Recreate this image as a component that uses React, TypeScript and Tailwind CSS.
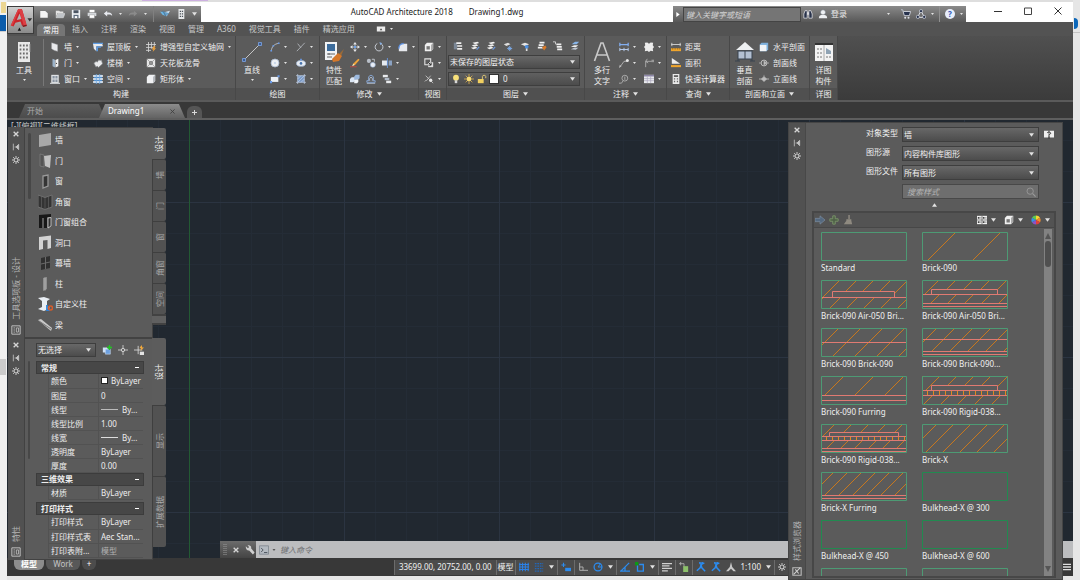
import React from "react";

type Kids = { children?: React.ReactNode };

/* ---------- icons (12 x 12 grid unless noted) ---------- */

const G: Record<string, React.ReactNode> = {
  newFile: <path d="M1.5 2.5h6l3 2.5v5.5h-9z" fill="#f4f4f4" />,
  open: (<><path d="M1 2h4l1 1h4v2H3L1 10z" fill="#e3e3e3" /><path d="M3.500 5.500H12l-2 5H1.200z" fill="#bfc3c7" stroke="#f2f2f2" strokeWidth=".5" /></>),
  save: (<><path d="M1 1h10v10H1z" fill="#edf0f4" /><path d="M3 1.500h6v3.500H3z" fill="#4b5563" /><path d="M3 7h6v4H3z" fill="#5d6b7d" /><path d="M4.500 8.500h3V11h-3z" fill="#fff" /></>),
  print: (<><path d="M3 1h6v3H3z" fill="#fff" /><path d="M.8 4.500h10.400v4H.8z" fill="#d5d8dc" /><path d="M3 7h6v4H3z" fill="#fff" stroke="#888" strokeWidth=".5" /></>),
  undo: <path d="M1 5.500 5 2v2.300h2c2.500 0 4 1.500 4 4.200-1-1.500-2-1.800-4-1.800H5V9z" fill="#e8eaf0" />,
  redo: <path d="M11 5.500 7 2v2.300H5C2.500 4.300 1 5.800 1 8.500c1-1.500 2-1.800 4-1.800h2V9z" fill="#8b8b8b" />,
  plane: (<><path d="M0 3l4 1 2 4-3-1z" fill="#6cb8e6" /><path d="M5 4l7-2-4 7z" fill="#cfe3f2" /><path d="M2 2l9 3-4 4z" fill="#3d83b8" opacity=".7" /></>),
  keypad: (<><path d="M3 0h7v12H3z" fill="#e6e8ea" /><path d="M4.500 2h1.500v1.500H4.500zM7 2h1.500v1.500H7zM4.500 5h1.500v1.500H4.500zM7 5h1.500v1.500H7zM4.500 8h1.500v1.500H4.500zM7 8h1.500v1.500H7z" fill="#4a5058" /></>),
  wall: <path d="M2 1l7 2.200v8L5 10 2 8z" fill="#e9eaec" stroke="#b9bcc0" strokeWidth=".5" />,
  door: (<><path d="M3 1l3 1v9.500L3 10z" fill="#9cb3c9" /><path d="M6.500 2.500L10 1v9L6.500 11.500z" fill="#f2f2f2" /><circle cx="7.800" cy="6.500" r=".7" fill="#444" /></>),
  window: (<><path d="M1.500 1h9v10h-9z" fill="#dfe2e5" /><path d="M3 2.500h2.600v3H3zM6.500 2.500H9v3H6.500zM3 6.500h2.600v3H3zM6.500 6.500H9v3H6.500z" fill="#8993a0" /><path d="M0 10.500h12V12H0z" fill="#c5c8cb" /></>),
  roof: (<><path d="M0 2h11l1 3H4v6L1 8z" fill="#e8eaee" /><path d="M0 1h12v1.500H0zM4 5h7l-2 2H6v4H4z" fill="#5e9be0" /></>),
  stair: <path d="M1 6l3-2 1 1 2-3 1.500 1L10 2l1.500 5-5 4.500-1-1.500-2 .8z" fill="#e9eaec" stroke="#7b7e82" strokeWidth=".8" />,
  space: (<><path d="M1 1h10v10H1z" fill="#4f8fd0" /><path d="M0 2.500h12M0 6h12M0 9.500h12" stroke="#f2f4f6" strokeWidth="1.800" /><path d="M4 0v12M8 0v12" stroke="#70a6dc" /></>),
  grid: (<><path d="M3 0v12M6.500 0v8M10 0v6M0 3h12M0 6.500h9M0 10h6" stroke="#d9d9d9" strokeWidth="1" /><path d="M9 5l-2 4h2l-1 3 4-4.500h-2L11.500 5z" fill="#f0a33c" /></>),
  ceiling: (<><path d="M1 1h10v10H1z" fill="#e6e6e6" /><path d="M4 4h4v4H4z" fill="#5a5a5a" /><path d="M1 1l3 3M11 1L8 4M1 11l3-3M11 11L8 8" stroke="#777" strokeWidth=".7" /><circle cx="6" cy="6" r="1" fill="#ddd" /></>),
  cube: (<><path d="M1 3.500L3.500 1H11v7.500L8.500 11H1z" fill="#f0f1f3" /><path d="M8.500 3.500L11 1v7.500L8.500 11z" fill="#b3b7bc" /></>),
  arc: (<><path d="M1.500 11C2 5.500 5 2.500 10.500 1.500" fill="none" stroke="#c7cad0" /><path d="M.5 9.500h2v2h-2zM9.500.5h2v2h-2zM3 3.500h2v2H3z" fill="#6a9be8" /></>),
  trimline: <path d="M1 11L10.500 1M2 2l4 5" stroke="#b8bcc2" fill="none" />,
  disc: (<><circle cx="6" cy="6" r="4.800" fill="#eef1f5" stroke="#a9b9cf" /><circle cx="6" cy="6" r="1" fill="#a3bde0" /></>),
  ellipse: (<><ellipse cx="6" cy="6.500" rx="5.500" ry="3.500" fill="#e8edf4" stroke="#9cb0ca" /><circle cx="6" cy="6.500" r="1.600" fill="#4673ad" /><path d="M5 1h2v2H5z" fill="#6a9be8" /></>),
  rect: (<><path d="M1 3.500h9v6H1z" fill="#eef1f5" /><path d="M9 1.500h2.500V4H9zM0 8.500h2.500V11H0z" fill="#6a9be8" /></>),
  hatch: (<><path d="M2 2h8v8H2z" fill="#7d9cc8" /><path d="M2 0v12M10 0v12M0 2h12M0 10h12M2 6l4-4M2 10l8-8M6 10l4-4" stroke="#c2d2ea" strokeWidth=".8" /></>),
  move: (<><path d="M6 0l2.200 3H3.800zM6 12l2.200-3H3.800zM0 6l3-2.200v4.400zM12 6L9 3.800v4.400z" fill="#ececec" /><path d="M6 2v8M2 6h8" stroke="#c4ccd6" /><path d="M4.800 4.800h2.400v2.400H4.800z" fill="#6aa0e8" /></>),
  rotate: (<><path d="M8.500 2A4.700 4.700 0 1 1 4 1.800" fill="none" stroke="#c5cad2" strokeWidth="1.200" /><path d="M6.500 0l3.500 1.500L7.500 4z" fill="#88aede" /></>),
  fillet: (<><path d="M1 11V7c0-3.500 2.500-5 5-5h5v9z" fill="#e7e9ed" /><path d="M1 8c0-4 2-6 6-6" fill="none" stroke="#5a8ee0" strokeWidth="1.500" /></>),
  erase: (<><path d="M0 10.500h8" stroke="#d0463c" /><path d="M3 9l1-2.500L10 .8 11.500 2 6 8.300z" fill="#f0a43a" /><path d="M2.500 9.800L4 7l1.700 1.300z" fill="#f5e5c0" /></>),
  copy: (<><circle cx="3.500" cy="3.500" r="2.500" fill="#b9bfc8" /><circle cx="8.200" cy="8.200" r="3" fill="#e8edf5" stroke="#8fa9cf" strokeWidth=".7" /><path d="M7 1.500h3v3" fill="none" stroke="#cfd4db" /></>),
  mirror: (<><path d="M0 3h6v6H0z" fill="#e6eaf0" /><path d="M6.500 0v12" stroke="#6a9be8" /><path d="M8 3h4v6H8z" fill="#8ba2c2" /></>),
  cubes: (<><path d="M0 6l2-2h4v4L4 10H0z" fill="#dbe6f4" /><path d="M5 3l2-2h4.500v4L9.500 7H5z" fill="#9cb9de" /><path d="M5 8l1.500-1.500H10v3L8.500 11H5z" fill="#f0f4f9" /></>),
  offset: (<><path d="M1 10V8h2.500C2 5 3.500 1.500 6 1.500S10 5 8.500 8H11v2z" fill="none" stroke="#8fb2e4" /><path d="M4.500 8C4 6 4.500 4 6 4s2 2 1.500 4M1 11.700h10" fill="none" stroke="#c6d2e4" /></>),
  order: (<><path d="M1 1h6v3H1z" fill="#e8eaed" /><path d="M3 4.500h6v3H3z" fill="#b9c4d3" stroke="#555" strokeWidth=".5" /><path d="M5 8h6v3H5z" fill="#e8eaed" /></>),
  viewcube: (<><path d="M1 3.500L3.500 1H11v7.500L8.500 11H1z" fill="#f0f0f0" /><path d="M3 5h4v4H3z" fill="#777" /><path d="M8.500 3.500L11 1v7.500L8.500 11z" fill="#a6a6a6" /></>),
  viewback: (<><path d="M1 1h7v7H1z" fill="none" stroke="#e3e3e3" strokeWidth="1.300" /><path d="M5 5h6v6H5z" fill="#dcdcdc" /><path d="M5 5l3.500 3.500M8.500 5.500v3h-3" stroke="#333" strokeWidth="1.200" fill="none" /></>),
  explode: (<><path d="M2 2l4 4M8 2L3 8M1 9l2-2M7 7l4 4" stroke="#c8c8c8" /><circle cx="8" cy="7.500" r="2" fill="#e5e5e5" /></>),
  layerA: (<><path d="M1 2h4v8H1z" fill="#7b8796" /><path d="M4 1.500h6v2H4zM5 5h6v2H5zM5 8.500h6v2H5z" fill="#f0f0f0" /></>),
  layerB: (<><path d="M3 2l6-1 2 1.500-5 1.500zM2 5l6-1 2 1.500L5 7zM1 8l6-1 2 1.500L4 10z" fill="#efefef" /><path d="M8 10.500L11 7" stroke="#6a9be8" strokeWidth="1.300" /></>),
  layerC: (<><path d="M1 4l5-2 3 2-5 2z" fill="#dedede" /><path d="M8 6v6M5 9h6M6 7l4 4M10 7l-4 4" stroke="#7eb0f0" /></>),
  layerD: (<><path d="M1 4l5-2 5 2-5 2z" fill="#e6e6e6" /><circle cx="8" cy="7" r="2.300" fill="#4d8fe0" /><path d="M7 9h2v3H7z" fill="#e0e0e0" /></>),
  layerE: (<><path d="M3 1h6v2H3zM2 4h6v2H2zM1 7h6v2H1z" fill="#f0f0f0" /><path d="M6 7.500l4-2 1.500 2-3 4z" fill="#d97a28" /></>),
  layerF: (<><path d="M0 1h3v3" stroke="#ddd" fill="none" /><path d="M4 3h6v2H4zM4.500 6h6v2h-6zM5 9h6v2H5z" fill="#efefef" /></>),
  layerG: (<><path d="M2 4l4-3h5L8 4z" fill="#86b4e8" /><path d="M1 7l4-2h5L7 7.500z" fill="#efefef" /><path d="M1 10l4-2h5l-3 2.500z" fill="#bfc8d4" /></>),
  dims: (<><path d="M1 1v4M11 1v4M1 3h10" stroke="#82aef0" strokeWidth="1.500" /><path d="M1 7v4M6 7v4M11 7v4M1 9h10" stroke="#b4c9ea" strokeWidth="1.200" /></>),
  cloud: <path d="M1 1l3-.5L6 2l2-1.500 3 .5-.5 3L12 6l-1.500 2 .5 3-3-.5L6 12l-2-1.500-3 .5.5-3L0 6l1.500-2z" fill="#ececec" />,
  leader: (<><path d="M1 11L6 4h3" fill="none" stroke="#bcbcbc" /><circle cx="10" cy="3" r="1.800" fill="#e8e8e8" /><path d="M0 12l1-4 2 2z" fill="#bcbcbc" /></>),
  leader2: (<><path d="M2 11V4h8M4 1L2 4l3 2" fill="none" stroke="#b5b5b5" /><path d="M9 2h3v3H9z" fill="#999" /></>),
  tag: (<><circle cx="7" cy="5" r="3.500" fill="none" stroke="#b5b5b5" /><path d="M0 11h3l2-3M7 3v4" fill="none" stroke="#b5b5b5" /></>),
  table: (<><path d="M0 1h12v10H0z" fill="#e9ebee" /><path d="M0 1h12v2H0z" fill="#8c86a6" /><path d="M0 5.500h12M0 8h12M4 3v8M8 3v8" stroke="#aaa6bd" strokeWidth=".8" /></>),
  dist: (<><path d="M0 3h12M1 1v4M11 1v4" stroke="#c8c8c8" strokeWidth="1.200" /><path d="M0 7.500h12v3.500H0z" fill="#f0a52c" /><path d="M2 7.500V9M5 7.500V9M8 7.500V9M10.500 7.500V9" stroke="#6b4a10" strokeWidth=".7" /></>),
  area: (<><path d="M1 7V0l10 7z" fill="#ececec" /><path d="M0 8.500h12V11H0z" fill="#f0a52c" /></>),
  calc: (<><path d="M2 0h8v12H2z" fill="#e9e9e9" /><path d="M3.500 1.500h5v2h-5z" fill="#555" /><path d="M3.500 5h1.500v1.500H3.500zM7 5h1.500v1.500H7zM3.500 8h1.500v2H3.500zM7 8h1.500v2H7z" fill="#666" /></>),
  hsec: (<><path d="M1 3l2-2h8v8l-2 2H1z" fill="#7db0dc" /><path d="M1 3.500h8V11H1z" fill="#f2f4f6" /></>),
  sec: (<><circle cx="6" cy="6" r="3.500" fill="none" stroke="#c0c0c0" strokeWidth="1.200" /><path d="M6 3.500L9 6 6 8.500zM0 6h2.500M9.500 6H12" fill="#c9c9c9" stroke="#b0b0b0" /></>),
  elev: (<><path d="M6 3l3 3-3 3-3-3zM0 6h12" fill="#bdbdbd" stroke="#bdbdbd" /><path d="M6 1v3" stroke="#999" /></>),
  binoc: (<><path d="M1 11V6l1.500-4h2.500v9zM7 11V2h2.500L11 6v5z" fill="#28324a" stroke="#e9e9ee" strokeWidth=".9" /><path d="M5 4h2v3H5z" fill="#e9e9ee" /></>),
  user: (<><circle cx="6" cy="4" r="3" fill="#eef0f3" stroke="#5a6370" strokeWidth=".5" /><path d="M1 11c0-3 2-4 5-4s5 1 5 4z" fill="#eef0f3" /></>),
  cart: (<><path d="M0 1h2l2 7h6l1.500-5H3" fill="#27324d" stroke="#dfe2ea" strokeWidth="1" /><circle cx="5" cy="10.500" r="1.200" fill="#dfe2ea" /><circle cx="9" cy="10.500" r="1.200" fill="#dfe2ea" /></>),
  share: (<><path d="M6 2L2 10h8z" fill="none" stroke="#dfe2ea" strokeWidth="1.200" /><circle cx="6" cy="2.500" r="1.900" fill="#27324d" stroke="#dfe2ea" strokeWidth=".8" /><circle cx="2.200" cy="9.500" r="1.900" fill="#27324d" stroke="#dfe2ea" strokeWidth=".8" /><circle cx="9.800" cy="9.500" r="1.900" fill="#27324d" stroke="#dfe2ea" strokeWidth=".8" /></>),
  play: (<><path d="M1 3h10v6H1z" fill="#ececec" /><path d="M4.500 7.500L6 5l1.500 2.500z" fill="#444" /></>),
  x: <path d="M2.500 2.500l7 7M9.500 2.500l-7 7" stroke="#d6d6d6" strokeWidth="2" />,
  pin: <path d="M2 1v10M4 6h2M10 2v8L6 6z" stroke="#c6c6c6" strokeWidth="1.200" fill="#c6c6c6" />,
  gear: (<><circle cx="6" cy="6" r="3" fill="none" stroke="#cccccc" strokeWidth="1.700" /><path d="M6 0v2M6 10v2M0 6h2M10 6h2M1.800 1.800l1.400 1.400M8.800 8.800l1.400 1.400M1.800 10.200l1.400-1.400M8.800 3.200l1.400-1.400" stroke="#cccccc" strokeWidth="1.500" /></>),
  propsIcon: (<><path d="M1 1h10v10H1z" fill="none" stroke="#bcbcbc" strokeWidth="1.200" /><path d="M3 3.500h2M3 6h2M3 8.500h2M6.500 3.500H9v5H6.500z" stroke="#bcbcbc" fill="none" /></>),
  editIcon: (<><path d="M1 2h10v9H1z" fill="none" stroke="#bcbcbc" strokeWidth="1.300" /><path d="M2 10l8-8M4 4l4 5" stroke="#d0d0d0" strokeWidth="1.300" /></>),
  bulb: (<><circle cx="6" cy="4.500" r="3.500" fill="#f7e07a" /><path d="M4.500 7.500h3v3.500h-3z" fill="#d8d8d8" /></>),
  sun: (<><path d="M6 0v12M0 6h12M2 2l8 8M10 2l-8 8" stroke="#e8b84c" strokeWidth=".9" /><circle cx="6" cy="6" r="2.800" fill="#f7dc74" /></>),
  lock: (<><path d="M1 6h7v5H1z" fill="#f0cf60" /><path d="M6.500 6V3c0-2 4-2 4 0v2" fill="none" stroke="#d9c274" strokeWidth="1.200" /></>),
  addSel: (<><path d="M1 3h6v6H1z" fill="#cfe0f5" /><path d="M4 5h6v6H4z" fill="#6da0df" stroke="#d8e6f8" strokeWidth=".6" /><path d="M9 0v6M6 3h6" stroke="#22c522" strokeWidth="1.700" /></>),
  cross: (<><path d="M6 0v12M0 6h12" stroke="#d5d5d5" /><circle cx="6" cy="6" r="2" fill="#666" stroke="#ddd" /></>),
  quick: (<><path d="M5 1v10M0 6h10" stroke="#dcdcdc" /><path d="M9 0L6.500 4h2L8 7l4-4h-2z" fill="#f2a93c" /><path d="M7 8h5v4H7z" fill="#e4e4e4" /></>),
  help2: (<><path d="M0 1h5.500v8H0zM6.500 1H12v8H6.500z" fill="#f0f0f0" /><path d="M4 3.500C4 2 8 2 8 4c0 1-2 1-2 2.500M6 7.500v3" stroke="#333" strokeWidth="1.200" fill="none" /></>),
  glass: (<><circle cx="5" cy="5" r="3.800" fill="none" stroke="#9b9b9b" strokeWidth="1" /><path d="M8 8l3.500 3.500" stroke="#9b9b9b" strokeWidth="1.300" /></>),
  arrowR: <path d="M0 4h6V1l6 5-6 5V8H0z" fill="#55697f" stroke="#7d8ea0" strokeWidth=".8" />,
  plusG: <path d="M4.500 1h3v3.500H11v3H7.500V11h-3V7.500H1v-3h3.500z" fill="#4f6148" stroke="#82a070" strokeWidth=".9" />,
  brush: (<><path d="M6.500 0h1.500v5H6.500z" fill="#9b948a" /><path d="M4 5h6v2l1 4H1l3-4z" fill="#8f8a80" /></>),
  details: (<><path d="M0 1h12v10H0z" fill="#f0f0f0" /><path d="M6 1v10M0 6h12" stroke="#555" strokeWidth=".8" /><path d="M1 2.500h2v2H1zM7 2.500h2v2H7zM1 7.500h2v2H1zM7 7.500h2v2H7z" fill="#444" /><path d="M3.500 3.500h2M9.500 3.500h2M3.500 8.500h2M9.500 8.500h2" stroke="#777" /></>),
  wheel: (<><path d="M6 6V.5A5.500 5.500 0 0 1 10.800 3.300z" fill="#f5d633" /><path d="M6 6l4.800-2.700A5.500 5.500 0 0 1 10.800 8.700z" fill="#f08c2e" /><path d="M6 6l4.800 2.700A5.500 5.500 0 0 1 6 11.500z" fill="#e0413c" /><path d="M6 6v5.500A5.500 5.500 0 0 1 1.200 8.700z" fill="#8d52c8" /><path d="M6 6L1.200 8.700A5.500 5.500 0 0 1 1.200 3.300z" fill="#3a8fe8" /><path d="M6 6L1.200 3.300A5.500 5.500 0 0 1 6 .5z" fill="#5cc852" /></>),
  wrench: <path d="M1 1.500l2.500 2.500L5 2.500 3 .5c3-.8 5 1 4.300 3.500L11.500 9 9.500 11.500 5 6.500C2.500 7 .5 4.500 1 1.500z" fill="#cfcfcf" />,
  prompt: (<><path d="M.5 1h11v10H.5z" fill="#b4bac1" stroke="#7c848d" /><path d="M2.500 3.500L5 6 2.500 8.500M6 9h4" fill="none" stroke="#3f474f" /></>),
  sGrid: <path d="M1 1v10M4.300 1v10M7.600 1v10M11 1v10M0 3h12M0 6h12M0 9h12" stroke="#2b80e6" strokeWidth="1.300" />,
  sSnap: <path d="M1 2h10M1 5h10M1 8h10M1 11h10" stroke="#2367b8" strokeDasharray="2 1" strokeWidth="1.400" />,
  sInfer: (<><path d="M3 1v5M.5 3.500h5" stroke="#2b8cf0" strokeWidth="1.300" /><path d="M5 7h7v4H5z" fill="#2b8cf0" /></>),
  sOrtho: <path d="M2 1v9h10M2 6h4v4" stroke="#b3b3b3" fill="none" strokeWidth="1.100" />,
  sPolar: (<><circle cx="6" cy="6" r="4.700" fill="none" stroke="#2b8cf0" strokeWidth="1.500" /><path d="M6 6h5M6 6l3-4" stroke="#2b8cf0" strokeWidth="1.200" /></>),
  sIso: <path d="M0 11h12M1 11L11 1M6 6v5" stroke="#2b8cf0" strokeWidth="1.500" fill="none" />,
  sOsnap: (<><path d="M3 4v7h7V3H5" fill="none" stroke="#2b8cf0" strokeWidth="1.600" /><path d="M0 0h4v4H0z" fill="#0c9a14" /></>),
  sLines: <path d="M0 2h12M0 4.500h9M0 7.500h12M0 10.500h7" stroke="#d0d0d0" strokeWidth="1.500" />,
  sCycle: (<><path d="M0 2h6v4M2 0v4" stroke="#b0b0b0" fill="none" /><path d="M5 5h6v7H5z" fill="#8cc06a" /></>),
  sPerson: <path d="M1 10.500l4-3.500 1-3M11 11L7 7 6 3l4-2M6 2.500a1.500 1.500 0 1 1 .1 0" stroke="#2b8cf0" strokeWidth="1.800" fill="none" />,
  sAnno: <path d="M6 0l1.500 6L12 11H9L6 8l-3 3H0l4.500-5z" fill="#c8c8c8" />,
  menu: <path d="M0 2h12M0 6h12M0 10h12" stroke="#e0e0e0" strokeWidth="2" />,
};

const SIZES: Record<number, string> = {
  8: "size-2 shrink-0",
  10: "size-[10px] shrink-0",
  12: "size-3 shrink-0",
};

function Ic({ n, s = 10 }: { n: string; s?: 8 | 10 | 12 }) {
  return (
    <svg viewBox="0 0 12 12" className={SIZES[s]} aria-hidden="true">
      {G[n]}
    </svg>
  );
}

function Caret({ big = false, up = false }: { big?: boolean; up?: boolean }) {
  return (
    <svg viewBox="0 0 6 4" className={big ? "w-[5px] h-1 shrink-0" : "w-[3px] h-0.5 shrink-0"} aria-hidden="true">
      <path d={up ? "M0 4h6L3 0z" : "M0 0h6L3 4z"} fill="#e2e2e2" />
    </svg>
  );
}

/* ---------- title bar and menu ---------- */

function AppButton() {
  return (
    <button aria-label="应用程序菜单" className="flex h-[28px] w-[27px] shrink-0 items-center justify-center border border-[#3c3c3c] bg-linear-to-b from-[#cfcfcf] to-[#8a8a8a]">
      <svg viewBox="0 0 27 27" className="size-[25px]" aria-hidden="true">
        <path d="M3 19L11 1h4l5 17-5 1-1.500-4.500L8 16l-2 4z" fill="#c9252b" />
        <path d="M11 1h4l5 17-3 .5L12 3 4.500 19.500 3 19z" fill="#dc3f44" />
        <path d="M9.500 13l3-7 2 6z" fill="#b4b4b4" />
        <path d="M15 19l5-1 .5 1.500-4 1z" fill="#8a1418" />
        <path d="M21 11h5l-2.500 3.500z" fill="#333" />
        <path d="M10.500 24.500l1.800-3.500 1.800 3.500z" fill="#111" />
      </svg>
    </button>
  );
}

function Tool({ n, label, s = 10 }: { n: string; label: string; s?: 8 | 10 | 12 }) {
  return (
    <button aria-label={label} className="flex items-center justify-center">
      <Ic n={n} s={s} />
    </button>
  );
}

function TitleRow() {
  return (
    <div className="flex h-4 items-stretch bg-white">
      <div className="flex items-center gap-1.5 bg-linear-to-b from-[#8a8a8a] to-[#585858] pl-[5px] pr-1">
        <Tool n="newFile" label="新建" />
        <Tool n="open" label="打开" />
        <Tool n="save" label="保存" />
        <Tool n="print" label="打印" />
        <Tool n="undo" label="放弃" />
        <Caret />
        <Tool n="redo" label="重做" />
        <Caret />
        <span className="h-4 w-px bg-[#808080]" />
        <Tool n="plane" label="共享" />
        <Tool n="keypad" label="工具选项板" />
        <Caret big />
      </div>
      <h1 className="flex flex-1 items-start justify-center gap-4 pt-0.5 text-[8px] text-[#222]">
        <span>AutoCAD Architecture 2018</span>
        <span>Drawing1.dwg</span>
      </h1>
      <div className="flex w-[293px] items-center bg-linear-to-b from-[#8a8a8a] to-[#585858]">
        <svg viewBox="0 0 4 6" className="ml-[3px] mr-[3px] h-[5px] w-1" aria-hidden="true"><path d="M0 0v6l4-3z" fill="#fff" /></svg>
        <input aria-label="搜索" placeholder="键入关键字或短语" className="h-[15px] w-[118px] border border-[#444] bg-[#757575] px-0.5 text-[8px] italic text-white outline-none placeholder:text-[#d2d2d2]" />
        <div className="flex flex-1 items-center gap-[5px] pl-0.5 pr-[3px]">
          <Tool n="binoc" label="查找" />
          <Tool n="user" label="用户" />
          <a href="#login" className="-ml-0.5 text-[8px] text-[#e9e9e9]">登录</a>
          <span className="flex-1" />
          <Caret />
          <span className="w-px" />
          <Tool n="cart" label="购物车" />
          <Tool n="share" label="连接" />
          <Caret />
          <span className="h-4 w-px bg-[#909090]" />
          <span className="flex size-[10px] items-center justify-center rounded-full bg-[#e8eefb] text-[8px] font-bold leading-none text-[#2c55b8]">?</span>
          <Caret />
        </div>
      </div>
      <div className="flex w-[107px] items-start justify-between pl-[28px] pr-[11px] pt-px">
        <button aria-label="最小化"><svg viewBox="0 0 8 8" className="size-2"><path d="M0 4.500h8" stroke="#333" /></svg></button>
        <button aria-label="最大化"><svg viewBox="0 0 8 8" className="size-2"><path d="M.5 1h7v6.500h-7z" stroke="#444" fill="none" /></svg></button>
        <button aria-label="关闭"><svg viewBox="0 0 8 8" className="size-2"><path d="M.5.5l7 7M7.500.5l-7 7" stroke="#333" /></svg></button>
      </div>
    </div>
  );
}

const MENU = ["插入", "注释", "渲染", "视图", "管理", "A360", "视觉工具", "插件", "精选应用"];

function MenuRow() {
  return (
    <nav className="flex h-[14px] items-center gap-[13px] pl-[9px] text-[8px] text-[#c9c9c9]">
      <button className="-mx-1.5 mt-0.5 h-3 rounded-t-sm bg-[#757575] px-1.5 text-white">常用</button>
      {MENU.map((m) => (
        <button key={m}>{m}</button>
      ))}
      <span className="ml-2 flex items-center gap-1"><Ic n="play" /><Caret /></span>
    </nav>
  );
}

/* ---------- ribbon ---------- */

function Panel({ title, w, caret, children }: Kids & { title: string; w: string; caret?: boolean }) {
  return (
    <section className={`${w} flex shrink-0 flex-col border-r border-[#484848] bg-[#5b5b5b]`}>
      <div className="flex flex-1 pt-[3px]">{children}</div>
      <h2 className="flex h-3 items-center justify-center gap-1 bg-[#505050] text-[8px]">
        {title}
        {caret && <Caret big />}
      </h2>
    </section>
  );
}

function Cmd({ n, label, text, caret }: { n: string; label?: string; text?: string; caret?: boolean }) {
  return (
    <button aria-label={label} className="flex h-4 items-center gap-1 whitespace-nowrap">
      <Ic n={n} />
      {text && <span>{text}</span>}
      {caret && <Caret />}
    </button>
  );
}

function Big({ lines, icon, caret, w }: { lines: string[]; icon: React.ReactNode; caret?: boolean; w: string }) {
  return (
    <button className={`${w} flex shrink-0 flex-col items-center pt-0.5 leading-[11px]`}>
      <span className="mb-0.5 flex h-[21px] items-center">{icon}</span>
      {lines.map((l) => (
        <span key={l}>{l}</span>
      ))}
      {caret && <span className="flex h-1.5 items-end"><Caret /></span>}
    </button>
  );
}

function Ribbon() {
  return (
    <div className="flex h-[66px] border-b-2 border-[#5a5a5a] bg-linear-to-b from-[#505050] to-[#3b3b3b] text-[8px] text-[#eeeeee]">
      <Panel title="构建" w="w-[229px]">
        <Big w="w-[34px]" lines={["工具"]} caret icon={
          <svg viewBox="0 0 14 20" className="h-5 w-[14px]">
            <path d="M1 0h12v20H1z" fill="#e8e8e8" />
            <path d="M3.500 2.500v15M6.800 2.500v15M10 2.500v15" stroke="#6a6a6a" strokeWidth="1.700" strokeDasharray="2 2" />
            <path d="M13 2v8" stroke="#888" />
          </svg>} />
        <span className="mx-[2px] mb-0.5 w-px bg-[#787878]" />
        <div className="ml-1 w-[43px]">
          <Cmd n="wall" text="墙" caret /><Cmd n="door" text="门" caret /><Cmd n="window" text="窗口" caret />
        </div>
        <div className="w-[53px]">
          <Cmd n="roof" text="屋顶板" caret /><Cmd n="stair" text="楼梯" caret /><Cmd n="space" text="空间" caret />
        </div>
        <div>
          <Cmd n="grid" text="增强型自定义轴网" caret /><Cmd n="ceiling" text="天花板龙骨" /><Cmd n="cube" text="矩形体" caret />
        </div>
      </Panel>
      <Panel title="绘图" w="w-[84px]">
        <Big w="w-[32px]" lines={["直线"]} caret icon={
          <svg viewBox="0 0 20 20" className="size-5">
            <path d="M2 18L18 2" stroke="#c4c4c4" />
            <path d="M.5 16.500h3v3h-3zM16.500.5h3v3h-3z" fill="#3d5f96" stroke="#7ea6e8" strokeWidth=".8" />
          </svg>} />
        <div className="ml-0.5 grid auto-rows-[16px] grid-cols-2 gap-x-[9px]">
          <Cmd n="arc" label="圆弧" caret /><Cmd n="trimline" label="构造线" caret />
          <Cmd n="disc" label="圆" caret /><Cmd n="ellipse" label="椭圆" caret />
          <Cmd n="rect" label="矩形" caret /><Cmd n="hatch" label="图案填充" caret />
        </div>
      </Panel>
      <Panel title="修改" w="w-[99px]" caret>
        <Big w="w-[28px]" lines={["特性", "匹配"]} icon={
          <svg viewBox="0 0 22 22" className="size-[22px]">
            <path d="M2 1h12v18H2z" fill="#f1f3f5" /><path d="M4 3h8v7H4z" fill="#3c6c9c" />
            <path d="M4 13h8M4 16h5M6 12v2" stroke="#666" />
            <path d="M21 8l-5 5 2 2z" fill="#9a6a38" /><path d="M9 18l6-6 4 3-3 5-6 1z" fill="#d5782a" />
          </svg>} />
        <div className="ml-0.5">
          <div className="flex gap-[7px]"><Cmd n="move" label="移动" caret /><Cmd n="rotate" label="旋转" caret /><Cmd n="fillet" label="圆角" caret /></div>
          <div className="flex gap-[6px]"><Cmd n="erase" label="删除" /><Cmd n="copy" label="复制" /><Cmd n="mirror" label="镜像" caret /></div>
          <div className="flex gap-[6px]"><Cmd n="cubes" label="阵列" /><Cmd n="offset" label="偏移" /><Cmd n="order" label="绘图次序" caret /></div>
        </div>
      </Panel>
      <Panel title="视图" w="w-[28px]">
        <div className="ml-[5px]"><Cmd n="viewcube" label="视图" caret /><Cmd n="viewback" label="视觉样式" caret /><Cmd n="explode" label="导航" caret /></div>
      </Panel>
      <Panel title="图层" w="w-[138px]" caret>
        <div className="flex flex-1 flex-col gap-[2px] pl-px pr-1">
          <div className="flex h-[14px] items-center justify-between pl-[5px]">
            {["layerA", "layerB", "layerB", "layerC", "layerD", "layerE", "layerF", "layerG"].map((n, i) => (
              <Tool key={i} n={n} label={`图层工具 ${i + 1}`} />
            ))}
          </div>
          <Select label="图层状态" value="未保存的图层状态" />
          <div className="mt-px flex h-[14px] items-center gap-[3px] border border-[#3e3e3e] bg-linear-to-b from-[#606060] to-[#4c4c4c] pl-0.5">
            <Ic n="bulb" /><Ic n="sun" /><Ic n="lock" />
            <span className="size-2 bg-white outline outline-[#333]" />
            <select aria-label="当前图层" className="flex-1 appearance-none bg-transparent pl-0.5 outline-none"><option>0</option></select>
            <span className="pr-1"><Caret big /></span>
          </div>
        </div>
      </Panel>
      <Panel title="注释" w="w-[82px]" caret>
        <Big w="w-[34px]" lines={["多行", "文字"]} icon={
          <svg viewBox="0 0 18 20" className="h-5 w-[18px]"><path d="M1.500 19L8 1h2l6.500 18M4 13h10" fill="none" stroke="#c9c9c9" strokeWidth="1.600" /></svg>} />
        <div className="grid auto-rows-[16px] grid-cols-2 gap-x-2">
          <Cmd n="dims" label="标注" caret /><Cmd n="cloud" label="修订云线" caret />
          <Cmd n="leader" label="引线" caret /><Cmd n="leader2" label="多重引线" caret />
          <Cmd n="tag" label="标记" caret /><Cmd n="table" label="表格" caret />
        </div>
      </Panel>
      <Panel title="查询" w="w-[63px]" caret>
        <div className="ml-1"><Cmd n="dist" text="距离" /><Cmd n="area" text="面积" /><Cmd n="calc" text="快速计算器" /></div>
      </Panel>
      <Panel title="剖面和立面" w="w-[80px]" caret>
        <Big w="w-[29px]" lines={["垂直", "剖面"]} icon={
          <svg viewBox="0 0 20 20" className="size-5">
            <path d="M10 0l9 8H1z" fill="#eef0f2" /><path d="M3 9h14v8H3z" fill="#b3c0d2" />
            <path d="M3 9h14M3 17h14M10 9v8M3 8v11M17 8v11M0 19h5M15 19h5" stroke="#39424e" />
          </svg>} />
        <div><Cmd n="hsec" text="水平剖面" /><Cmd n="sec" text="剖面线" /><Cmd n="elev" text="立面线" /></div>
      </Panel>
      <Panel title="详图" w="w-[28px]">
        <Big w="w-full" lines={["详图", "构件"]} icon={
          <svg viewBox="0 0 18 18" className="size-[18px]">
            <path d="M0 0h18v18H0z" fill="#f3f3f3" /><path d="M0 0h18v2H0z" fill="#333" />
            <path d="M9 2v16" stroke="#aaa" /><path d="M2 6h5M2 10h5M2 14h5M11 14h5" stroke="#777" strokeDasharray="2 1" />
            <path d="M11 5l5 3v3h-5z" fill="#8fa3b4" />
          </svg>} />
      </Panel>
    </div>
  );
}

function Select({ label, value, id, h = "h-[14px]" }: { label: string; value: string; id?: string; h?: string }) {
  return (
    <span className={`${h} flex w-full items-center border border-[#3e3e3e] bg-linear-to-b from-[#686868] to-[#4c4c4c] pr-1 text-[8px] text-[#f0f0f0]`}>
      <select id={id} aria-label={label} className="min-w-0 flex-1 appearance-none bg-transparent pl-px outline-none">
        <option>{value}</option>
      </select>
      <Caret big />
    </span>
  );
}

function DocTabs() {
  return (
    <div className="flex h-[18px] items-end border-b-2 border-[#5e5e5e] bg-[#383838] pl-3 text-[8px]">
      <button className="h-[14px] w-[86px] rounded-t-md bg-linear-to-b from-[#5c5c5c] to-[#4c4c4c] pl-2 text-left text-[#a9a9a9] [clip-path:polygon(7%_0,93%_0,100%_100%,0_100%)]">开始</button>
      <div className="-ml-1.5 flex h-[14px] w-[86px] items-center rounded-t-md bg-linear-to-b from-[#8c8c8c] to-[#636363] pl-[9px] pr-2.5 text-white [clip-path:polygon(7%_0,93%_0,100%_100%,0_100%)]">
        <button className="flex-1 text-left">Drawing1</button>
        <button aria-label="关闭图形"><svg viewBox="0 0 6 6" className="size-[5px]"><path d="M.5.5l5 5M5.500.5l-5 5" stroke="#3d3d3d" /></svg></button>
      </div>
      <button aria-label="新图形" className="ml-0.5 flex h-3 w-[15px] items-center justify-center rounded-t-md bg-[#555]">
        <svg viewBox="0 0 6 6" className="size-[5px]"><path d="M3 0v6M0 3h6" stroke="#d8d8d8" strokeWidth="1.200" /></svg>
      </button>
    </div>
  );
}

/* ---------- drawing area ---------- */

function Canvas() {
  return (
    <div className="relative flex-1 bg-[#212830]">
      <svg className="absolute inset-0 size-full" aria-hidden="true">
        <defs>
          <pattern id="grid" x="27" y="82" width="155" height="155" patternUnits="userSpaceOnUse">
            <path d="M31.500 0v155M62.500 0v155M93.500 0v155M124.500 0v155M0 31.500h155M0 62.500h155M0 93.500h155M0 124.500h155" stroke="#242c36" />
            <path d="M.5 0v155M0 .5h155" stroke="#2b3441" />
          </pattern>
        </defs>
        <rect width="100%" height="100%" fill="url(#grid)" />
        <path d="M182.500 0v2000" stroke="#235a33" />
      </svg>
      <p className="absolute left-1 top-0.5 text-[8px] leading-[8px] text-[#c8c8c8]">[-][俯视][二维线框]</p>
      <div className="absolute bottom-0 left-[213px] right-0 flex h-[17px] items-center bg-[#bcbdbf]">
        <div className="flex h-full w-[36px] items-center gap-[5px] bg-linear-to-b from-[#6c6c6c] to-[#444] pl-[3px]">
          <svg viewBox="0 0 4 12" className="h-3 w-1"><path d="M1 0v12M3 0v12" stroke="#999" strokeDasharray="1 1" /></svg>
          <Tool n="x" label="关闭命令行" s={8} />
          <Tool n="wrench" label="自定义" />
        </div>
        <span className="flex items-center gap-[3px] pl-[3px]"><Ic n="prompt" /><svg viewBox="0 0 6 4" className="h-0.5 w-1"><path d="M0 0h6L3 4z" fill="#555" /></svg></span>
        <input aria-label="命令行" placeholder="键入命令" className="ml-1 h-full flex-1 bg-transparent text-[8px] italic text-[#333] outline-none placeholder:text-[#6f7072]" />
      </div>
    </div>
  );
}

function Cell({ children }: Kids) {
  return <div className="flex h-[15px] items-center gap-[5px] border-l border-[#6c6c6c] bg-[#4b4b4b] px-[3px]">{children}</div>;
}

function StatusBar() {
  return (
    <footer className="flex h-[18px] items-center bg-[#383838] text-[8px] text-[#f0f0f0]">
      <div className="flex h-full flex-1 items-start gap-0.5 pl-[7px] leading-3 text-[#c4c4c4]">
        <button className="h-3 w-[30px] rounded-b-md bg-[#8c8c8c] font-bold text-white">模型</button>
        <button className="h-3 w-[34px] rounded-b-md bg-[#585858]">Work</button>
        <button aria-label="新建布局" className="flex h-3 w-[14px] items-center justify-center rounded-b-md bg-[#4c4c4c] text-white">+</button>
      </div>
      <Cell><span className="px-px">33699.00, 20752.00, 0.00</span></Cell>
      <Cell><button className="-mx-0.5">模型</button></Cell>
      <Cell><Tool n="sGrid" label="栅格" /><Tool n="sSnap" label="捕捉" /><Caret big /></Cell>
      <Cell><Tool n="sInfer" label="推断约束" /></Cell>
      <Cell><Tool n="sOrtho" label="正交" /><Tool n="sPolar" label="极轴追踪" /><Caret big /></Cell>
      <Cell><Tool n="sIso" label="等轴测" /><Tool n="sOsnap" label="对象捕捉" /><Caret big /></Cell>
      <Cell><Tool n="sLines" label="线宽" /></Cell>
      <Cell><Tool n="sCycle" label="选择循环" /></Cell>
      <Cell><Tool n="sPerson" label="注释可见性" /><Tool n="sPerson" label="自动缩放" /><Tool n="sAnno" label="注释比例" /><button>1:100</button><Caret big /></Cell>
      <Cell><Tool n="gear" label="切换工作空间" s={8} /></Cell>
      <div className="flex w-[284px] justify-end pr-0.5"><Tool n="menu" label="自定义" s={8} /></div>
    </footer>
  );
}

/* ---------- palettes ---------- */

function VText({ children }: Kids) {
  return <span className="rotate-180 whitespace-nowrap leading-none [text-orientation:sideways] [writing-mode:vertical-rl]">{children}</span>;
}

function Strip({ title, icon = "propsIcon" }: { title: string; icon?: string }) {
  return (
    <div className="flex w-4 shrink-0 flex-col items-center gap-[5px] bg-[#515151] py-[3px] text-[8px] text-[#b5b5b5]">
      <Tool n="x" label="关闭" s={8} />
      <Tool n="pin" label="自动隐藏" s={8} />
      <Tool n="gear" label="特性" s={8} />
      <span className="flex-1" />
      <VText>{title}</VText>
      <Ic n={icon} />
    </div>
  );
}

function SideTab({ text, active, h }: { text: string; active?: boolean; h: string }) {
  return (
    <button className={`${h} ${active ? "bg-[#5c5c5c] text-[#f0f0f0]" : "border-l border-t border-[#3f3f3f] bg-[#525252] text-[#a8a8a8]"} flex w-[14px] items-center justify-center rounded-r-xs`}>
      <VText>{text}</VText>
    </button>
  );
}

const ITEMS: [string, React.ReactNode][] = [
  ["墙", <path key="a" d="M1 3l12-2v12L1 15z" fill="#a9a9a9" />],
  ["门", <g key="a"><path d="M2 1l4 1v12l-4-1z" fill="#555" stroke="#888" strokeWidth=".6" /><path d="M6 3l7-1-1 13-5-2z" fill="#c2c2c2" /></g>],
  ["窗", <path key="a" d="M5 3l5-1v11l-5 2z" fill="#353535" stroke="#999" strokeWidth="1.300" />],
  ["角窗", <g key="a"><path d="M0 1l7 2.500L14 1v12l-7 2.500L0 13z" fill="#343434" stroke="#707070" /><path d="M3.500 2.500v12M7 3.500v12M10.500 2.500v12" stroke="#666" strokeWidth=".6" /></g>],
  ["门窗组合", <g key="a"><path d="M1 1l12-1v3H9v11H6V4H4v10H1z" fill="#171717" /><path d="M10 4l3-.5V12l-3 2z" fill="#333" stroke="#d5d5d5" strokeWidth=".8" /></g>],
  ["洞口", <path key="a" d="M1 2l12-1.500V13l-3.500 1V5L5 5.500V14l-4 1z" fill="#d2d2d2" />],
  ["幕墙", <g key="a"><path d="M3 3l9-2v12l-9 2z" fill="#303030" /><path d="M7.500 2v12M3 9l9-2" stroke="#696969" /></g>],
  ["柱", <g key="a"><path d="M5 2l4-1v12l-4 2z" fill="#8e8e8e" /><path d="M7 1.500v13" stroke="#b0b0b0" /></g>],
  ["自定义柱", <g key="a"><path d="M0 2l6-1 6 2-3 2v5l3 2-6 3-6-2 4-2V5z" fill="#e9eef4" /><path d="M9 9v5h3" stroke="#2b80d8" strokeWidth="1.800" fill="none" /><circle cx="12.500" cy="12" r="2" fill="none" stroke="#d85b2a" strokeWidth="1.500" /></g>],
  ["梁", <g key="a"><path d="M0 3l3-1 11 9-1 3z" fill="#c9c9c9" /><path d="M1 4l12 8" stroke="#777" /></g>],
];

function ToolPalette() {
  return (
    <aside className="absolute left-px top-[7px] flex h-[211px] text-[8px] text-[#eeeeee]">
      <Strip title="工具选项板 - 设计" />
      <div className="flex w-[129px] border border-[#424242] bg-[#5b5b5b] py-0.5 pl-[3px]">
        <span className="mt-[3px] h-[66px] w-[3px] rounded bg-[#474747]" />
        <ul className="ml-[7px] flex flex-1 flex-col">
          {ITEMS.map(([name, art]) => (
            <li key={name} className="flex flex-1">
              <button className="flex flex-1 items-center gap-0.5">
                <svg viewBox="0 0 15 16" className="h-4 w-[15px]" aria-hidden="true">{art}</svg>
                {name}
              </button>
            </li>
          ))}
        </ul>
      </div>
      <div className="-ml-px flex flex-col pt-px">
        <SideTab text="设计" active h="h-[31px]" />
        {["墙", "门", "窗", "角窗", "空间"].map((t) => <SideTab key={t} text={t} h="h-[31px]" />)}
        <span className="h-[11px] border-y-2 border-[#424242] bg-[#606060]" />
      </div>
    </aside>
  );
}

const GROUPS: { title: string; mt: string; rows: [string, React.ReactNode][] }[] = [
  {
    title: "常规", mt: "mt-1", rows: [
      ["颜色", <span key="v" className="flex items-center gap-1"><i className="ml-px size-[5px] bg-white outline outline-[#222]" />ByLayer</span>],
      ["图层", "0"],
      ["线型", <span key="v" className="flex items-center gap-1"><i className="h-px w-[17px] bg-[#bbb]" />By...</span>],
      ["线型比例", "1.00"],
      ["线宽", <span key="v" className="flex items-center gap-1"><i className="h-px w-[17px] bg-[#ddd]" />By...</span>],
      ["透明度", "ByLayer"],
      ["厚度", "0.00"],
    ],
  },
  { title: "三维效果", mt: "mt-0", rows: [["材质", "ByLayer"]] },
  { title: "打印样式", mt: "mt-0.5", rows: [["打印样式", "ByLayer"], ["打印样式表", "Aec Stan..."], ["打印表附...", <span key="v" className="text-[#b0b0b0]">模型</span>]] },
];

function PropertiesPalette() {
  return (
    <aside className="absolute left-px top-[218px] flex h-[222px] text-[8px] text-[#eeeeee]">
      <Strip title="特性" />
      <div className="flex w-[129px] border border-[#424242] bg-[#5b5b5b] pl-[3px]">
        <span className="mt-[22px] h-[98px] w-[3px] rounded bg-[#474747]" />
        <div className="ml-1.5 mr-2 flex-1 pt-1">
          <div className="flex items-center gap-1.5">
            <div className="w-[60px]"><Select label="选择" value="无选择" /></div>
            <Tool n="addSel" label="切换 PICKADD" /><Tool n="cross" label="选择对象" /><Tool n="quick" label="快速选择" />
          </div>
          {GROUPS.map((g) => (
            <section key={g.title} className={g.mt}>
              <h3 className="flex h-[13px] items-center justify-between border border-[#3c3c3c] bg-[#474747] px-1 font-bold">
                {g.title}<button aria-label="折叠" className="h-px w-1 bg-white" />
              </h3>
              <table className="ml-3 w-[95px] table-fixed border-collapse leading-[13px]">
                <tbody>
                  {g.rows.map(([k, v]) => (
                    <tr key={k} className="h-[14px] border-b border-[#525252]">
                      <th className="w-[50px] overflow-hidden whitespace-nowrap border-x border-[#525252] p-0 pl-0.5 text-left font-normal">{k}</th>
                      <td className="whitespace-nowrap p-0 pl-0.5">{v}</td>
                    </tr>
                  ))}
                </tbody>
              </table>
            </section>
          ))}
        </div>
      </div>
      <div className="-ml-px flex flex-col">
        <SideTab text="设计" active h="h-[67px]" />
        <SideTab text="显示" h="h-[71px]" />
        <SideTab text="扩展数据" h="h-[71px]" />
      </div>
    </aside>
  );
}

/* wall style swatches */

const O = "#c8781e";
const P = "#e07a72";

function Hatch({ y0, y1, pitch, off }: { y0: number; y1: number; pitch: number; off: number }) {
  const h = y1 - y0;
  const lines: string[] = [];
  for (let x = off - pitch * 3; x < 90; x += pitch) lines.push(`M${x} ${h}l${h} ${-h}`);
  return (
    <svg x="0" y={y0} width="86" height={h}><path d={lines.join("")} stroke={O} fill="none" /></svg>
  );
}

function HLines({ ys }: { ys: number[] }) {
  return <path d={ys.map((y) => `M0 ${y}.5h86`).join("")} stroke={P} fill="none" />;
}

function Box({ x0, x1, y0, y1 }: { x0: number; x1: number; y0: number; y1: number }) {
  return <path d={`M${x0}.5 ${y1}V${y0}.5H${x1}.5V${y1}`} stroke={P} fill="#5b5b5b" />;
}

function Cells({ y0, y1, step }: { y0: number; y1: number; step: number }) {
  const d: string[] = [];
  for (let x = 5; x < 86; x += step) d.push(`M${x}.5 ${y0}V${y1}`);
  return <path d={d.join("")} stroke="#e08a1e" />;
}

const STYLES: [string, React.ReactNode, string][] = [
  ["Standard", null, "#4d9a74"],
  ["Brick-090", <Hatch key="a" y0={0} y1={29} pitch={45} off={5} />, "#4d9a74"],
  ["Brick-090 Air-050 Bri...", <g key="a"><Hatch y0={0} y1={17} pitch={17} off={2} /><Hatch y0={17} y1={29} pitch={17} off={8} /><Box x0={11} x1={73} y0={11} y1={17} /><HLines ys={[17]} /></g>, "#4d9a74"],
  ["Brick-090 Air-050 Bri...", <g key="a"><Hatch y0={0} y1={14} pitch={17} off={3} /><Hatch y0={14} y1={24} pitch={17} off={8} /><Box x0={9} x1={75} y0={9} y1={14} /><HLines ys={[14, 23, 26]} /></g>, "#4d9a74"],
  ["Brick-090 Brick-090", <g key="a"><Hatch y0={0} y1={29} pitch={22} off={11} /><HLines ys={[14]} /></g>, "#4d9a74"],
  ["Brick-090 Brick-090...", <g key="a"><Hatch y0={0} y1={23} pitch={18} off={10} /><HLines ys={[11, 23, 26]} /></g>, "#4d9a74"],
  ["Brick-090 Furring", <g key="a"><Hatch y0={0} y1={19} pitch={30} off={4} /><HLines ys={[19, 24]} /></g>, "#4d9a74"],
  ["Brick-090 Rigid-038...", <g key="a"><Hatch y0={0} y1={14} pitch={17} off={4} /><Hatch y0={19} y1={29} pitch={17} off={1} /><Box x0={9} x1={75} y0={9} y1={14} /><Cells y0={14} y1={19} step={6} /><HLines ys={[14, 19]} /></g>, "#4d9a74"],
  ["Brick-090 Rigid-038...", <g key="a"><Hatch y0={0} y1={12} pitch={17} off={2} /><Hatch y0={16} y1={24} pitch={14} off={6} /><Box x0={8} x1={77} y0={8} y1={12} /><Cells y0={12} y1={16} step={6} /><HLines ys={[12, 16, 24, 27]} /></g>, "#4d9a74"],
  ["Brick-X", <Hatch key="a" y0={0} y1={29} pitch={17} off={3} />, "#4d9a74"],
  ["Brick-X Furring", <g key="a"><Hatch y0={0} y1={24} pitch={14} off={3} /><HLines ys={[23, 26]} /></g>, "#4d9a74"],
  ["Bulkhead-X @ 300", null, "#218a50"],
  ["Bulkhead-X @ 450", null, "#218a50"],
  ["Bulkhead-X @ 600", null, "#218a50"],
  ["", null, "#4d9a74"],
  ["", null, "#4d9a74"],
];

const FILTERS = [["kind", "对象类型", "墙"], ["source", "图形源", "内容构件库图形"], ["file", "图形文件", "所有图形"]];

function StyleBrowser() {
  return (
    <aside className="absolute -bottom-1 right-[10px] top-0.5 flex w-[275px] border border-[#454545] bg-[#5b5b5b] text-[8px] text-[#f0f0f0]">
      <Strip title="样式浏览器" icon="editIcon" />
      <div className="flex min-w-0 flex-1 flex-col border-l border-[#484848] px-1.5">
        <div className="grid grid-cols-[87px_137px_1fr] items-start gap-x-[3px] gap-y-1 pt-1">
          {FILTERS.map(([id, label, value]) => (
            <React.Fragment key={id}>
              <label htmlFor={id} className="pl-[54px] leading-[11px]">{label}</label>
              <Select id={id} label={label} value={value} h="h-[15px]" />
              <span className="flex h-[15px] items-center pl-0.5">{id === "kind" && <Tool n="help2" label="帮助" />}</span>
            </React.Fragment>
          ))}
          <div className="col-start-2 flex h-[15px] items-center border border-[#484848] bg-[#6e6e6e] pr-0.5">
            <input aria-label="搜索样式" placeholder="搜索样式" className="min-w-0 flex-1 bg-transparent pl-1 italic outline-none placeholder:text-[#b4b4b4]" />
            <Ic n="glass" />
          </div>
        </div>
        <div className="flex h-3 items-center justify-center"><Caret big up /></div>
        <div className="mb-px flex min-h-0 flex-1 flex-col border-2 border-[#474747]">
          <div className="flex h-[15px] shrink-0 items-center gap-1 border-b border-[#474747] bg-[#535353] pl-px pr-1">
            <Tool n="arrowR" label="添加到图形" /><Tool n="plusG" label="新建" /><Tool n="brush" label="清理" />
            <span className="flex-1" />
            <Tool n="details" label="视图" /><Caret big /><span />
            <Tool n="viewcube" label="着色" /><Caret big /><span />
            <Tool n="wheel" label="颜色" /><Caret big />
          </div>
          <div className="flex min-h-0 flex-1">
            <ul className="grid flex-1 auto-rows-[48px] grid-cols-[86px_86px] gap-x-[15px] overflow-hidden pl-[7px] pt-1">
              {STYLES.map(([name, art, c], i) => (
                <li key={i}>
                  <button className="block whitespace-nowrap text-left leading-3">
                    <svg viewBox="0 0 86 29" className="mb-px block h-[29px] w-[86px]" aria-hidden="true">
                      {art}
                      <path d="M.5.5h85v28H.5z" fill="none" stroke={c} />
                    </svg>
                    {name}
                  </button>
                </li>
              ))}
            </ul>
            <div className="mr-0.5 mt-px flex w-2 flex-col items-center bg-[#828282] py-1">
              <svg viewBox="0 0 6 6" className="size-1.5"><path d="M0 6h6L3 0z" fill="#555" /></svg>
              <span className="mt-0.5 h-[26px] w-1.5 rounded bg-[#505050]" />
              <span className="flex-1" />
              <svg viewBox="0 0 6 6" className="size-1.5"><path d="M0 0h6L3 6z" fill="#555" /></svg>
            </div>
          </div>
        </div>
      </div>
    </aside>
  );
}

export default function App() {
  return (
    <div className="flex min-h-screen overflow-hidden bg-[#e6e6e6] font-['Noto_Sans','Noto_Sans_CJK_SC',sans-serif] leading-none">
      <div className="flex w-[7px] shrink-0 flex-col bg-[#f0f0f0] pt-0.5">
        <span className="mx-px h-[11px] bg-[#ecd692]" />
        <span className="mt-0.5 h-4 w-1.5 bg-[#0b5cab]" />
        <span className="h-px w-1.5 bg-[#cfcfcf]" />
        <span className="flex-1" />
        <span className="mb-[205px] h-4 w-1.5 bg-[#cbcbcb]" />
      </div>
      <main className="flex min-w-0 flex-1 flex-col">
        <div className="flex h-0.5 bg-[#dedede]"><span className="ml-[135px] h-px w-[66px] bg-[#cdb0e0]" /></div>
        <div className="h-1 bg-white" />
        <header>
          <div className="flex bg-[#535353]">
            <AppButton />
            <div className="flex min-w-0 flex-1 flex-col">
              <TitleRow />
              <MenuRow />
            </div>
          </div>
          <Ribbon />
          <DocTabs />
        </header>
        <div className="relative mb-1 flex flex-1 flex-col">
          <Canvas />
          <StatusBar />
          <ToolPalette />
          <PropertiesPalette />
          <StyleBrowser />
        </div>
      </main>
      <div className="flex w-[7px] shrink-0 flex-col pt-[18px]">
        <span className="ml-px h-[11px] w-1 rounded-r-full bg-[#0b66b8]" />
        <span className="mt-[3px] h-px bg-[#c4c4c4]" />
      </div>
    </div>
  );
}
